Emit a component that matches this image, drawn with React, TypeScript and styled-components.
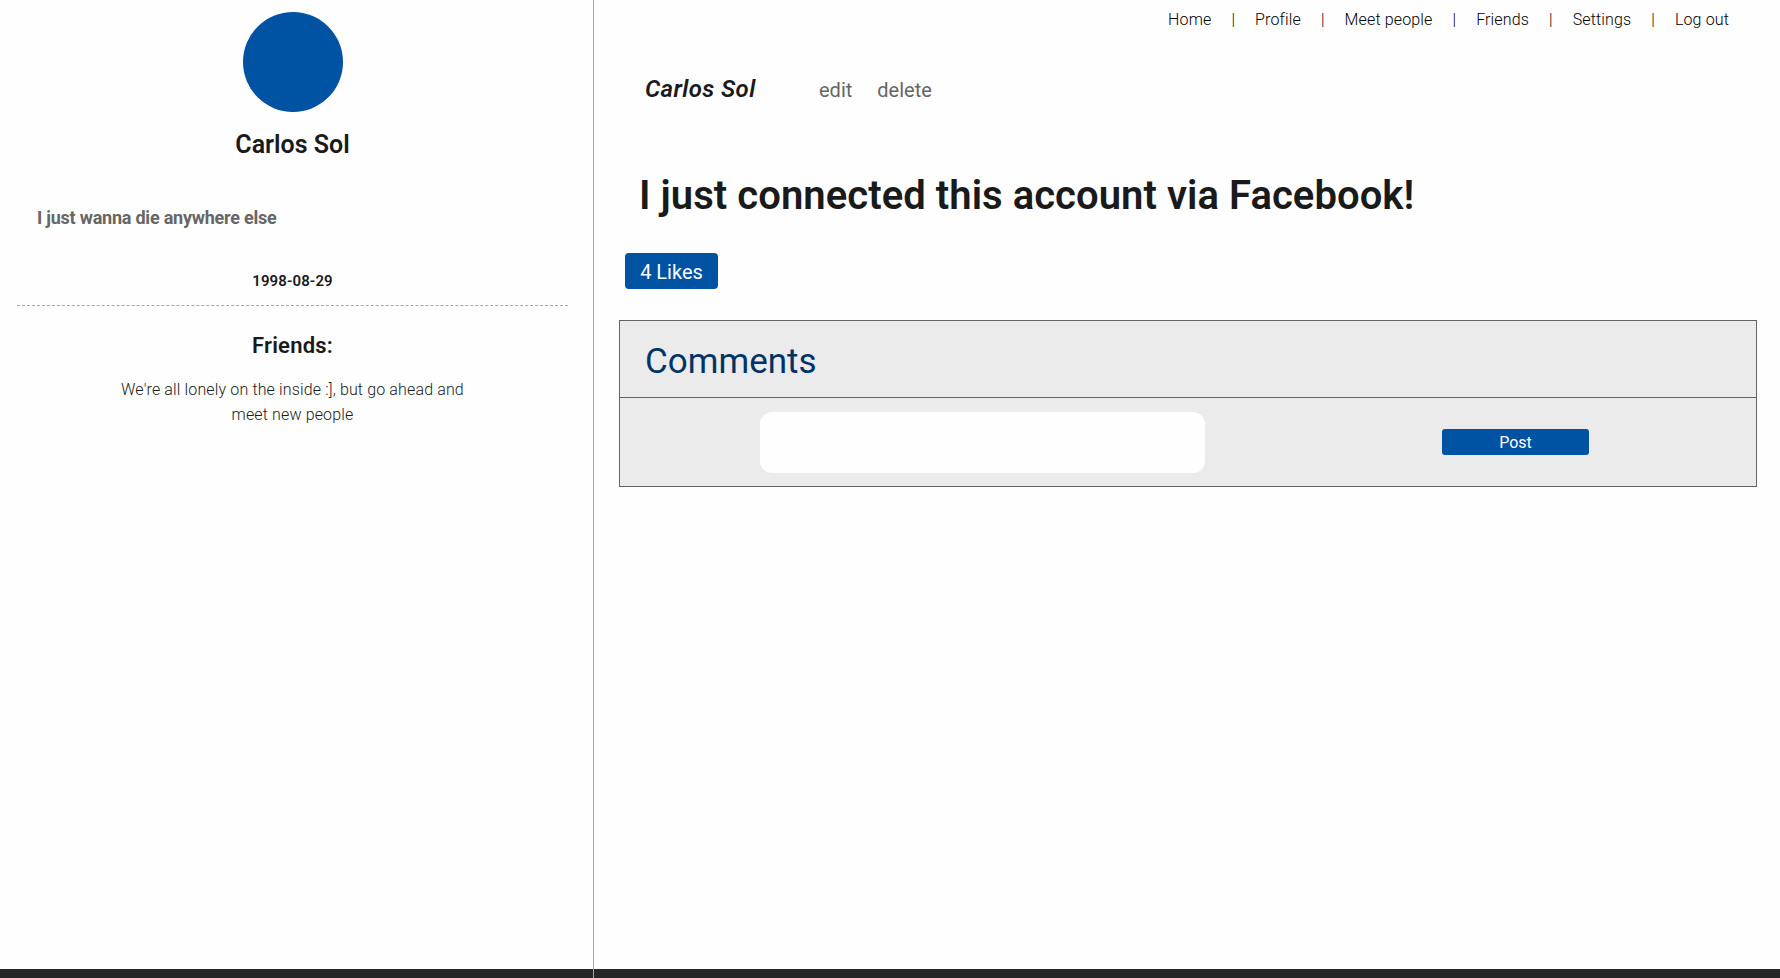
import React from "react";
import styled, { createGlobalStyle } from "styled-components";

const GlobalStyle = createGlobalStyle`
  *, *::before, *::after { box-sizing: border-box; }
  body {
    margin: 0;
    background: #fefefe;
    color: #1a1a1a;
    font-family: Roboto, "Liberation Sans", sans-serif;
    font-size: 16px;
    font-weight: 300;
    line-height: 25px;
  }
  h1, h2, h3, h4, h5, p { margin: 0; }
`;

const Page = styled.div`
  display: flex;
  height: 978px;
  overflow: hidden;
  background: linear-gradient(#fefefe 969px, #262626 969px);
`;

const Sidebar = styled.aside`
  flex: 0 0 594px;
  padding: 12px 25px 0 17px;
  border-right: 1px solid #a6a6a6;
  text-align: center;
`;

const Avatar = styled.div`
  width: 100px;
  height: 100px;
  margin: 0 auto;
  border-radius: 50%;
  background: #0052a3;
`;

const UserName = styled.h2`
  margin-top: 17px;
  font-size: 25px;
  font-weight: 600;
  line-height: 32px;
`;

const Bio = styled.p`
  margin-top: 44px;
  padding-left: 20px;
  color: #666;
  font-size: 18px;
  font-weight: 700;
  letter-spacing: -0.23px;
  line-height: 26px;
  text-align: left;
`;

const Birthday = styled.p`
  margin-top: 37px;
  padding-bottom: 11px;
  border-bottom: 1px dashed #a6a6a6;
  font-size: 15px;
  font-weight: 600;
  letter-spacing: 0.1px;
  line-height: 26px;
`;

const FriendsTitle = styled.h3`
  margin-top: 25px;
  font-size: 22px;
  font-weight: 600;
  letter-spacing: 0.2px;
  line-height: 30px;
`;

const FriendsNote = styled.p`
  width: 360px;
  margin: 16px auto 0;
  letter-spacing: 0.14px;
`;

const Main = styled.main`
  flex: 1;
  min-width: 0;
  padding: 0 23px 0 25px;
`;

const Nav = styled.nav`
  display: flex;
  justify-content: flex-end;
  padding: 7px 28px 0 0;
  color: #000;
  font-weight: 350;
`;

const NavItem = styled.a`
  letter-spacing: 0.14px;

  & + &::before {
    content: "|";
    margin: 0 20px;
  }
`;

const PostHeader = styled.header`
  display: flex;
  align-items: baseline;
  margin-top: 41px;
  padding-left: 26px;
  line-height: 32px;
`;

const Author = styled.h4`
  width: 174px;
  font-size: 24px;
  font-style: italic;
  font-weight: 600;
  letter-spacing: 0.4px;
`;

const Action = styled.a`
  margin-right: 25px;
  color: #666;
  font-size: 20px;
  font-weight: 400;
`;

const PostTitle = styled.h1`
  margin-top: 66px;
  padding-left: 20px;
  font-size: 40px;
  font-weight: 600;
  letter-spacing: 0.05px;
  line-height: 48px;
`;

const LikeButton = styled.button`
  display: block;
  width: 93px;
  height: 36px;
  margin: 33px 0 0 6px;
  padding: 2px 0 0;
  border: 0;
  border-radius: 4px;
  background: #0052a3;
  color: #fefefe;
  font: 450 20px/34px Roboto, sans-serif;
`;

const Comments = styled.section`
  width: 1138px;
  margin-top: 31px;
  border: 1px solid #636363;
  background: #ebebeb;
`;

const CommentsTitle = styled.h2`
  height: 77px;
  padding: 19px 0 0 25px;
  border-bottom: 1px solid #636363;
  color: #036;
  font-size: 35px;
  font-weight: 380;
  line-height: 44px;
`;

const CommentForm = styled.form`
  display: flex;
  align-items: center;
  justify-content: space-between;
  height: 88px;
  padding: 0 167px 0 140px;
`;

const CommentInput = styled.input`
  width: 445px;
  height: 61px;
  margin: 1px 0 0;
  border: 0;
  border-radius: 12px;
  background: #fefefe;
`;

const PostButton = styled.button`
  width: 147px;
  height: 26px;
  padding: 2px 0 0;
  border: 0;
  border-radius: 3px;
  background: #0052a3;
  color: #fefefe;
  font: 450 16px/24px Roboto, sans-serif;
`;

const links = ["Home", "Profile", "Meet people", "Friends", "Settings", "Log out"];

export default function App() {
  return (
    <>
      <GlobalStyle />
      <Page>
        <Sidebar>
          <Avatar />
          <UserName>Carlos Sol</UserName>
          <Bio>I just wanna die anywhere else</Bio>
          <Birthday>1998-08-29</Birthday>
          <FriendsTitle>Friends:</FriendsTitle>
          <FriendsNote>We're all lonely on the inside :], but go ahead and meet new people</FriendsNote>
        </Sidebar>
        <Main>
          <Nav>
            {links.map((link) => (
              <NavItem key={link}>{link}</NavItem>
            ))}
          </Nav>
          <PostHeader>
            <Author>Carlos Sol</Author>
            <Action>edit</Action>
            <Action>delete</Action>
          </PostHeader>
          <PostTitle>I just connected this account via Facebook!</PostTitle>
          <LikeButton>4 Likes</LikeButton>
          <Comments>
            <CommentsTitle>Comments</CommentsTitle>
            <CommentForm>
              <CommentInput aria-label="Comment" />
              <PostButton type="button">Post</PostButton>
            </CommentForm>
          </Comments>
        </Main>
      </Page>
    </>
  );
}
